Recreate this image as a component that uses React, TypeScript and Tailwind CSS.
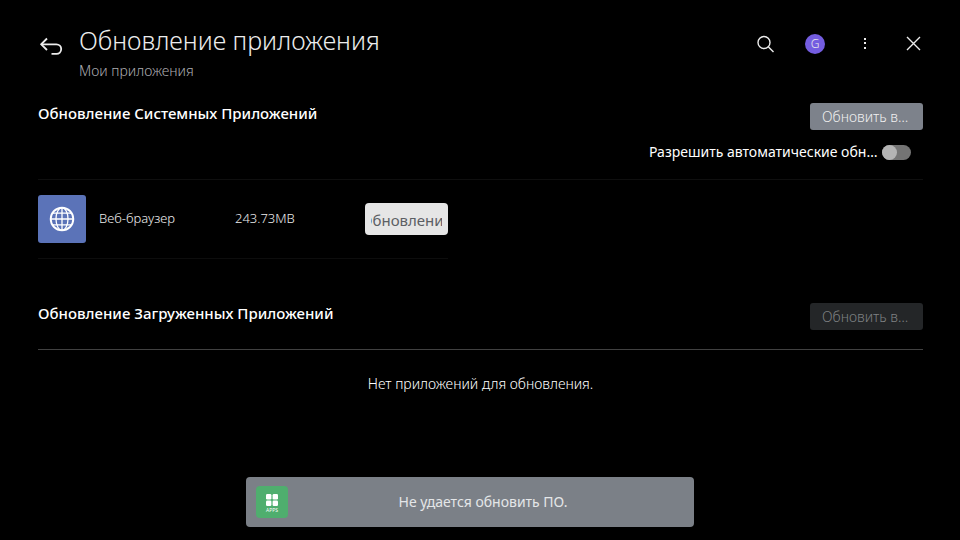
import { useState } from "react";

interface AppUpdate {
  id: string;
  name: string;
  size: string;
}

const systemUpdates: AppUpdate[] = [
  { id: "browser", name: "Веб-браузер", size: "243.73MB" }
];

function BackIcon() {
  return (
    <svg width="26" height="20" viewBox="0 0 26 20" fill="none" stroke="currentColor" strokeWidth="1.8">
      <path d="M9 1.5 3.2 7.3 9 13" />
      <path d="M3.2 7.3H18.4a4.8 4.8 0 0 1 0 9.6h-4.9" />
    </svg>
  );
}

function SearchIcon() {
  return (
    <svg width="18" height="18" viewBox="0 0 18 18" fill="none" stroke="currentColor" strokeWidth="1.4">
      <circle cx="8" cy="7.5" r="6" />
      <path d="m12.5 12 5 5" />
    </svg>
  );
}

function MoreIcon() {
  return (
    <svg width="18" height="18" viewBox="0 0 18 18" fill="currentColor">
      <rect x="8" y="3" width="2" height="2" />
      <rect x="8" y="7" width="2" height="2" />
      <rect x="8" y="12" width="2" height="2" />
    </svg>
  );
}

function CloseIcon() {
  return (
    <svg width="18" height="18" viewBox="0 0 18 18" fill="none" stroke="currentColor" strokeWidth="1.4">
      <path d="M2 2l13 13M15 2l-13 13" />
    </svg>
  );
}

function GlobeIcon() {
  return (
    <svg width="26" height="26" viewBox="0 0 26 26" fill="none" stroke="white">
      <circle cx="13" cy="13" r="11.3" strokeWidth="1.9" />
      <ellipse cx="13" cy="13" rx="6" ry="11.3" strokeWidth="1.3" />
      <path d="M13 1.7v22.6M1.7 13h22.6M3.5 7.2h19M3.5 18.8h19" strokeWidth="1.3" />
    </svg>
  );
}

function AppsIcon() {
  return (
    <span className="flex size-8 shrink-0 flex-col items-center rounded bg-[#4fae6e] pt-2 text-white">
      <svg width="12" height="12" viewBox="0 0 12 12" fill="currentColor">
        <rect width="5.4" height="5.4" rx="1.2" />
        <rect x="6.6" width="5.4" height="5.4" rx="1.2" />
        <rect y="6.6" width="5.4" height="5.4" rx="1.2" />
        <rect x="6.6" y="6.6" width="5.4" height="5.4" rx="1.2" />
      </svg>
      <span className="text-[5px] leading-[8px]">APPS</span>
    </span>
  );
}

function UpdateAllButton({ disabled = false }: { disabled?: boolean }) {
  return (
    <button
      disabled={disabled}
      className="h-[27px] w-[113px] shrink-0 truncate rounded-[3px] bg-[#7d828b] px-3 text-sm font-light text-[#f0f0f0] disabled:bg-[#242628] disabled:text-[#7f8183]"
    >
      Обновить все
    </button>
  );
}

function UpdateRow({ name, size }: AppUpdate) {
  return (
    <li className="flex h-[79px] items-center border-b border-[#0d0d0d]">
      <span className="flex size-12 shrink-0 items-center justify-center rounded-[3px] bg-[#5b73b8]">
        <GlobeIcon />
      </span>
      <span className="ml-[13px] flex-1 truncate text-[13px] font-light text-[#eeeeee]">{name}</span>
      <span className="w-[130px] shrink-0 text-[13px] font-light text-[#eeeeee]">{size}</span>
      <button className="h-8 w-[83px] shrink-0 rounded bg-[#e6e6e6] px-[6px] text-[15px] leading-[34px] text-[#5c5f64]">
        <span className="flex h-8 justify-center overflow-hidden whitespace-nowrap">Обновление</span>
      </button>
    </li>
  );
}

export default function App() {
  const [autoUpdate, setAutoUpdate] = useState(false);

  return (
    <div className="relative min-h-screen bg-black pr-[37px] pl-[38px] font-['Noto_Sans',sans-serif] text-white">
      <header className="flex pt-6 text-[#ececec]">
        <button aria-label="Назад" className="mt-[13px] h-5 w-[41px] shrink-0">
          <BackIcon />
        </button>
        <div className="flex-1">
          <h1 className="text-[25px] leading-8 font-light">Обновление приложения</h1>
          <p className="mt-[5px] text-sm leading-5 font-light text-[#acacb0]">Мои приложения</p>
        </div>
        <div className="flex h-10 items-center gap-[31px]">
          <button aria-label="Поиск">
            <SearchIcon />
          </button>
          <button
            aria-label="Профиль"
            className="flex size-5 items-center justify-center rounded-full bg-[#745de0] text-xs font-light"
          >
            G
          </button>
          <button aria-label="Меню">
            <MoreIcon />
          </button>
          <button aria-label="Закрыть">
            <CloseIcon />
          </button>
        </div>
      </header>

      <main>
        {/* System apps */}
        <section>
          <div className="mt-[22px] flex items-start justify-between">
            <h2 className="text-[15px] leading-5 font-medium">Обновление Системных Приложений</h2>
            <UpdateAllButton />
          </div>
          <div className="flex h-[50px] items-start justify-end gap-[3px] border-b border-[#0f0f0f] pt-[12px] pr-3">
            <label htmlFor="auto-update" className="w-[230px] truncate text-sm leading-5">
              Разрешить автоматические обновления
            </label>
            <input
              id="auto-update"
              type="checkbox"
              role="switch"
              checked={autoUpdate}
              onChange={e => setAutoUpdate(e.target.checked)}
              className="mt-[3px] h-[15px] w-[29px] appearance-none rounded-full bg-[#747474] before:block before:size-[15px] before:rounded-full before:bg-[#b4b4b4] checked:before:ml-auto"
            />
          </div>
          <ul className="grid grid-cols-2 gap-x-[65px]">
            {systemUpdates.map(app => (
              <UpdateRow key={app.id} {...app} />
            ))}
          </ul>
        </section>

        {/* Downloaded apps */}
        <section>
          <div className="mt-[44px] flex h-[47px] items-start justify-between border-b border-[#414141]">
            <h2 className="text-[15px] leading-5 font-medium">Обновление Загруженных Приложений</h2>
            <UpdateAllButton disabled />
          </div>
          <p className="pt-6 text-center text-sm leading-5 font-light">Нет приложений для обновления.</p>
        </section>
      </main>

      <div
        role="status"
        className="absolute inset-x-0 bottom-[13px] mx-auto flex h-[50px] w-[448px] -translate-x-[10px] items-center rounded bg-[#7b8087] pr-4 pl-[10px] text-sm text-[#e4e6e8]"
      >
        <AppsIcon />
        <span className="flex-1 text-center">Не удается обновить ПО.</span>
      </div>
    </div>
  );
}
